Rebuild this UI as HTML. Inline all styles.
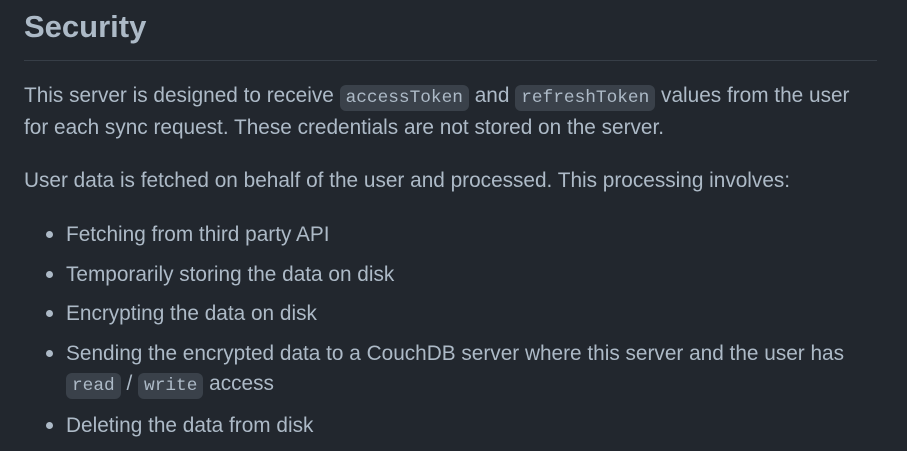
<!DOCTYPE html>
<html><head><meta charset="utf-8"><style>
html,body{margin:0;background:#22272e;}
body{width:907px;height:451px;overflow:hidden;font-family:"Liberation Sans",sans-serif;color:#adbac7;}
h2{position:absolute;left:24px;top:7px;margin:0;font-size:31px;font-weight:bold;color:#adbac7;line-height:40px;}
.hr{position:absolute;left:24px;right:30px;top:60px;height:1px;background:#373e47;}
p,li{font-size:20.8px;line-height:30px;margin:0;}
.c{font-family:"Liberation Mono",monospace;font-size:17.8px;background:#3a414a;border-radius:6px;padding:3px 6px;color:#adbac7;}
.wrap{position:absolute;left:24px;top:81px;width:845px;}
ul{margin:0;padding-left:42px;}
li{margin-bottom:8.7px;}
li::marker{font-size:22px;}
</style></head><body>
<h2>Security</h2><div class="hr"></div>
<div class="wrap">
<p>This server is designed to receive <span class="c">accessToken</span> and <span class="c">refreshToken</span> values from the user for each sync request. These credentials are not stored on the server.</p>
<p style="margin-top:23px">User data is fetched on behalf of the user and processed. This processing involves:</p>
<ul style="margin-top:23px">
<li>Fetching from third party API</li>
<li>Temporarily storing the data on disk</li>
<li>Encrypting the data on disk</li>
<li>Sending the encrypted data to a CouchDB server where this server and the user has <span class="c">read</span> / <span class="c">write</span> access</li>
<li>Deleting the data from disk</li>
</ul>
</div>
</body></html>
